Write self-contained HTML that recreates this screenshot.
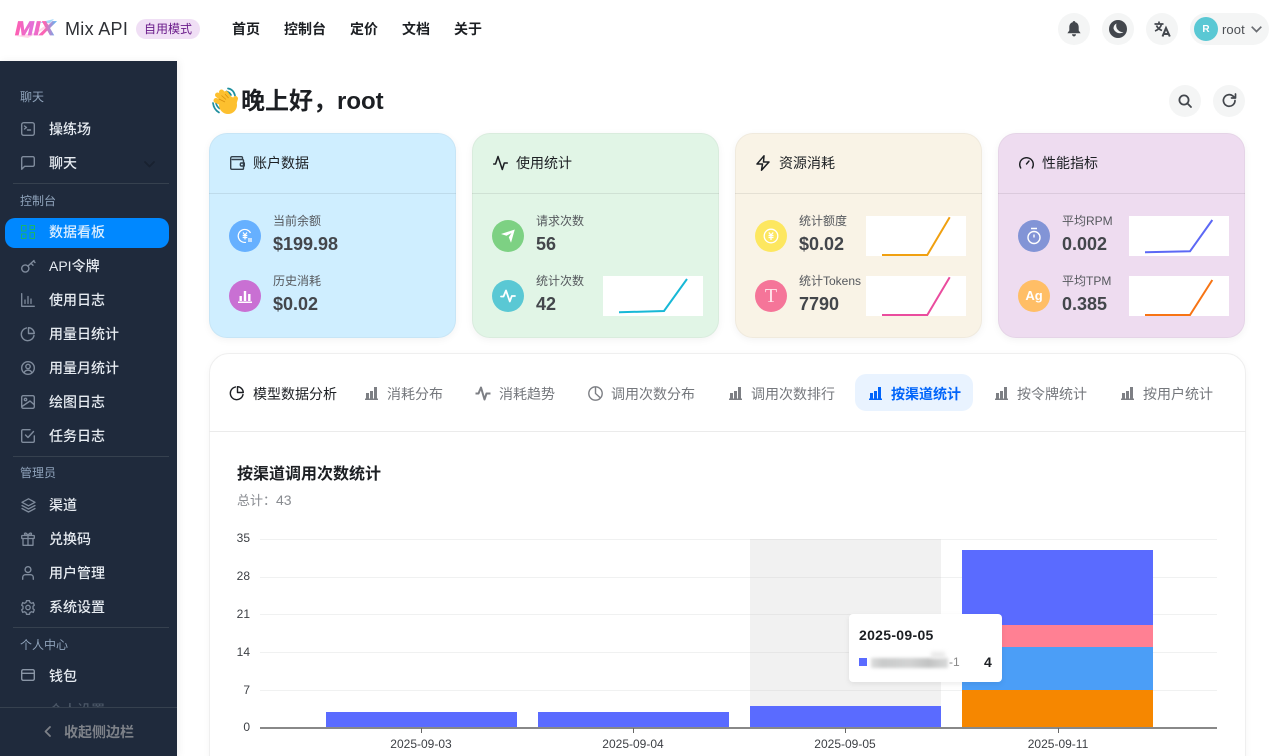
<!DOCTYPE html>
<html lang="zh"><head><meta charset="utf-8"><title>Mix API</title>
<style>
*{box-sizing:border-box;margin:0;padding:0}
html,body{width:1276px;height:756px;overflow:hidden;background:#fff}
body{position:relative;font-family:"Liberation Sans","Noto Sans CJK SC",sans-serif;color:#1c1f23}
.a{position:absolute;white-space:nowrap}
svg{display:block;overflow:visible}
.i{position:absolute;fill:none;stroke:currentColor;stroke-width:2;stroke-linecap:round;stroke-linejoin:round}
#side{position:absolute;left:0;top:61px;width:177px;height:695px;background:#1f2a3c;box-shadow:2px 0 8px rgba(0,0,0,.06);overflow:hidden}
.sl{position:absolute;left:20px;font-size:12px;line-height:18px;height:18px;color:#8fa3bb;white-space:nowrap}
.si{position:absolute;left:49px;font-size:14px;line-height:20px;height:20px;color:#e6ebf1;white-space:nowrap;font-weight:500}
.sd{position:absolute;left:13px;width:156px;height:1px;background:#36414f}
.nav{top:19px;font-size:14px;line-height:20px;font-weight:700;color:#1c1f23}
.cb{position:absolute;width:32px;height:32px;border-radius:50%;background:#f4f5f5}
.card{position:absolute;top:133px;width:247px;height:205px;border-radius:18px;border:1px solid rgba(0,0,0,.035);box-shadow:0 2px 8px rgba(0,0,0,.05)}
.card .hd{position:absolute;left:-1px;right:-1px;top:59px;height:1px;background:rgba(0,0,0,.08)}
.ct{top:153px;font-size:14px;line-height:20px;color:#1c1f23}
.c{position:absolute;width:32px;height:32px;border-radius:50%;color:#fff}
.lb{font-size:12px;line-height:16px;color:#55585d}
.v{font-size:18px;line-height:24px;font-weight:700;color:#43464b}
.sp{position:absolute;width:100px;height:40px;background:#fff}
.tab{top:384px;font-size:14px;line-height:20px;color:#74777c}
.gl{position:absolute;left:260px;width:957px;height:1px;background:#f0f1f1}
.yl{position:absolute;left:220px;width:30px;text-align:right;font-size:12px;line-height:14px;color:#3c3f44}
.xl{position:absolute;top:737px;width:100px;text-align:center;font-size:12px;line-height:14px;color:#3c3f44}
.bar{position:absolute}
.tk{position:absolute;top:728px;width:1px;height:5px;background:#666}
</style></head><body>

<!-- header -->
<svg class="a" style="left:14px;top:18px" width="42" height="22" viewBox="0 0 42 22">
<defs><linearGradient id="lg" x1="0" x2="1"><stop offset="0" stop-color="#ff5fb0"/><stop offset=".4" stop-color="#e36fd8"/><stop offset=".7" stop-color="#ff62b0"/><stop offset="1" stop-color="#5ab8f5"/></linearGradient></defs>
<path d="M2 18 20 15 40 2 32 10 14 20Z" fill="#ffc4e0" opacity=".7"/>
<path d="M24 5 40 1 36 5Z" fill="#8fd0fa" opacity=".8"/>
<text x="1" y="17" font-family="Liberation Sans" font-size="19" font-weight="700" font-style="italic" fill="url(#lg)" stroke="url(#lg)" stroke-width=".7" textLength="40" lengthAdjust="spacingAndGlyphs">MIX</text>
</svg>
<div class="a" style="left:65px;top:19px;font-size:18px;line-height:21px;letter-spacing:.3px;color:#2e3035">Mix API</div>
<div class="a" style="left:136px;top:19px;width:64px;height:20px;border-radius:10px;background:#f0dff5;color:#6a1b8a;font-size:12px;line-height:20px;text-align:center">自用模式</div>
<div class="a nav" style="left:232px">首页</div>
<div class="a nav" style="left:284px">控制台</div>
<div class="a nav" style="left:350px">定价</div>
<div class="a nav" style="left:402px">文档</div>
<div class="a nav" style="left:454px">关于</div>

<div class="cb" style="left:1058px;top:13px"></div>
<svg class="a" style="left:1067px;top:21px" width="14" height="16" viewBox="0 0 14 16"><path d="M7 0C7.800 0 8.300.6 8.300 1.300 10.600 1.900 11.700 3.800 11.700 6.200V9.500L13.600 12.300H.4L2.300 9.500V6.200C2.300 3.800 3.400 1.900 5.700 1.300 5.700.6 6.200 0 7 0ZM5 13.300H9C9 14.500 8.100 15.500 7 15.500S5 14.500 5 13.300Z" fill="#43474d"/></svg>
<div class="cb" style="left:1102px;top:13px"></div>
<svg class="a" style="left:1109px;top:20px" width="18" height="18" viewBox="0 0 18 18"><circle cx="9" cy="9" r="9" fill="#43474d"/><path d="M7.500 3.500A6.500 6.500 0 0 0 14.500 12 6.500 6.500 0 0 1 4.500 8.500 5.500 5.500 0 0 1 7.500 3.500Z" fill="#f4f5f5"/></svg>
<div class="cb" style="left:1146px;top:13px"></div>
<svg class="a" style="left:1154px;top:21px" width="17" height="16" viewBox="0 0 17 16" fill="none" stroke="#43474d" stroke-width="1.700"><path d="M.5 3H9.500M5 .5V3M7.500 3C7 6 4 9 1 10M2.500 4.500C3.500 7 5.500 8.500 8 9.500"/><path d="M8.500 15.500 12 7 15.800 15.500M9.700 13H14.600" stroke-width="2"/></svg>
<div class="a" style="left:1190px;top:13px;width:79px;height:32px;border-radius:16px;background:#f4f5f5"></div>
<div class="a" style="left:1194px;top:17px;width:24px;height:24px;border-radius:50%;background:#5ac8d4;color:#fff;font-size:10px;font-weight:700;line-height:25px;text-align:center">R</div>
<div class="a" style="left:1222px;top:22px;font-size:13px;line-height:15px;letter-spacing:.1px;color:#4c4f54">root</div>
<svg class="a" style="left:1251px;top:26px" width="11" height="7" viewBox="0 0 11 7" fill="none" stroke="#6a6d72" stroke-width="1.700"><path d="M.7.700 5.500 5.500 10.300.7"/></svg>

<!-- sidebar -->
<div id="side">
<div class="sl" style="top:27px">聊天</div>
<div class="si" style="top:58px">操练场</div>
<div class="si" style="top:92px">聊天</div>
<div class="sd" style="top:122px"></div>
<div class="sl" style="top:131px">控制台</div>
<div class="a" style="left:5px;top:157px;width:164px;height:30px;border-radius:10px;background:#0088ff"></div>
<div class="si" style="top:161px;color:#dbeeff">数据看板</div>
<div class="si" style="top:195px">API令牌</div>
<div class="si" style="top:229px">使用日志</div>
<div class="si" style="top:263px">用量日统计</div>
<div class="si" style="top:297px">用量月统计</div>
<div class="si" style="top:331px">绘图日志</div>
<div class="si" style="top:365px">任务日志</div>
<div class="sd" style="top:395px"></div>
<div class="sl" style="top:403px">管理员</div>
<div class="si" style="top:434px">渠道</div>
<div class="si" style="top:468px">兑换码</div>
<div class="si" style="top:502px">用户管理</div>
<div class="si" style="top:536px">系统设置</div>
<div class="sd" style="top:566px"></div>
<div class="sl" style="top:575px">个人中心</div>
<div class="si" style="top:605px">钱包</div>
<div class="si" style="top:639px;color:#4a5666">个人设置</div>

<svg class="i" style="left:21px;top:61px;color:#7f8b9c;stroke-width:1.400" width="14" height="14" viewBox="0 0 14 14"><rect x=".7" y=".7" width="12.600" height="12.600" rx="2"/><path d="M3.500 4 5.500 5.500 3.500 7M6.500 8H9.500"/></svg>
<svg class="i" style="left:21px;top:95px;color:#7f8b9c;stroke-width:1.400" width="14" height="14" viewBox="0 0 14 14"><path d="M.7 13.300V2.200C.7 1.400 1.400.7 2.200.7H11.800C12.600.7 13.300 1.400 13.300 2.200V8.800C13.300 9.600 12.600 10.300 11.800 10.300H3.700Z"/></svg>
<svg class="i" style="left:144px;top:100px;color:#182130;stroke-width:1.800" width="11" height="7" viewBox="0 0 11 7"><path d="M1 1 5.500 5.500 10 1"/></svg>
<svg class="i" style="left:21px;top:164px;color:#19b56d;stroke-width:1" width="14" height="14" viewBox="0 0 14 14"><rect x=".5" y=".5" width="4.500" height="5.500"/><rect x="9" y=".5" width="4.500" height="4"/><rect x=".5" y="9" width="4.500" height="4.500"/><rect x="9" y="7.500" width="4.500" height="6"/></svg>
<svg class="i" style="left:21px;top:198px;color:#7f8b9c;stroke-width:1.400" width="15" height="14" viewBox="0 0 15 14"><circle cx="4.300" cy="9.500" r="3.600"/><path d="M7 7 13 1.500M10 4.300 12 6.300M12.500 2 14 3.500"/></svg>
<svg class="i" style="left:21px;top:232px;color:#7f8b9c;stroke-width:1.300" width="14" height="14" viewBox="0 0 14 14"><path d="M.7.700V13.300H13.300M4 10.500V7M7 10.500V3.500M10 10.500V6"/></svg>
<svg class="i" style="left:21px;top:266px;color:#7f8b9c;stroke-width:1.400" width="14" height="14" viewBox="0 0 14 14"><path d="M5.500 1A6.400 6.400 0 1 0 13 8.500"/><path d="M7.500.7A6 6 0 0 1 13.300 6.500H7.500Z"/></svg>
<svg class="i" style="left:21px;top:300px;color:#7f8b9c;stroke-width:1.400" width="14" height="14" viewBox="0 0 14 14"><circle cx="7" cy="7" r="6.300"/><circle cx="7" cy="5.500" r="2.200"/><path d="M3.300 11.500C4 9.700 5.500 9.200 7 9.200S10 9.700 10.700 11.500"/></svg>
<svg class="i" style="left:21px;top:334px;color:#7f8b9c;stroke-width:1.400" width="14" height="14" viewBox="0 0 14 14"><rect x=".7" y=".7" width="12.600" height="12.600" rx="1.500"/><circle cx="4.500" cy="4.500" r="1.200"/><path d="M1 11.500 9 6 13 9.500"/></svg>
<svg class="i" style="left:21px;top:368px;color:#7f8b9c;stroke-width:1.400" width="14" height="14" viewBox="0 0 14 14"><path d="M13.300 7V12C13.300 12.800 12.800 13.300 12 13.300H2C1.200 13.300.7 12.800.7 12V2C.7 1.200 1.200.7 2 .7H9"/><path d="M4.500 6 7 8.500 12.500 2.500"/></svg>
<svg class="i" style="left:21px;top:437px;color:#7f8b9c;stroke-width:1.300" width="15" height="15" viewBox="0 0 15 15"><path d="M7.500.8 14 4.300 7.500 7.800 1 4.300Z"/><path d="M1 7.500 7.500 11 14 7.500M1 10.500 7.500 14 14 10.500"/></svg>
<svg class="i" style="left:21px;top:471px;color:#7f8b9c;stroke-width:1.300" width="14" height="14" viewBox="0 0 14 14"><rect x=".7" y="3.500" width="12.600" height="3" rx=".5"/><path d="M2 6.500V13.300H12V6.500M7 3.500V13.300M7 3.500C5 3.500 3.500 2.800 3.500 1.800S5.500.3 7 3.500C8.500.3 10.500.8 10.500 1.800S9 3.500 7 3.500Z"/></svg>
<svg class="i" style="left:22px;top:505px;color:#7f8b9c;stroke-width:1.400" width="12" height="14" viewBox="0 0 12 14"><circle cx="6" cy="3.600" r="2.900"/><path d="M.7 13.300V11.500C.7 9.800 2 8.700 3.500 8.700H8.500C10 8.700 11.300 9.800 11.300 11.500V13.300"/></svg>
<svg class="i" style="left:21px;top:539px;color:#7f8b9c;stroke-width:1.300" width="14" height="15" viewBox="0 0 14 15"><path d="M5.500.7H8.500L9 2.500 10.700 3.300 12.300 2.600 13.300 5.200 12 6.300V8.700L13.300 9.800 12.300 12.400 10.700 11.700 9 12.500 8.500 14.300H5.500L5 12.500 3.300 11.700 1.700 12.400.7 9.800 2 8.700V6.300L.7 5.200 1.700 2.600 3.300 3.300 5 2.500Z"/><circle cx="7" cy="7.500" r="2.200"/></svg>
<svg class="i" style="left:21px;top:608px;color:#8a96a6;stroke-width:1.400" width="14" height="12" viewBox="0 0 14 12"><rect x=".7" y=".7" width="12.600" height="10.600" rx="1.500"/><path d="M.7 4.300H13.300"/></svg>

<div class="a" style="left:0;top:646px;width:177px;height:49px;background:#1f2a3c;border-top:1px solid #36414f"></div>
<svg class="i" style="left:44px;top:665px;color:#7d8188;stroke-width:1.800" width="7" height="11" viewBox="0 0 7 11"><path d="M6 1 1.500 5.500 6 10"/></svg>
<div class="a" style="left:64px;top:661px;font-size:14px;line-height:20px;font-weight:700;color:#7d8188">收起侧边栏</div>
</div>

<!-- welcome -->
<svg class="a" style="left:211px;top:87px" width="28" height="28" viewBox="0 0 28 28">
<path d="M17 1.500C20.500 2 23 4.500 24 8.500M15.500 4.500C17.500 5 19 6 20 8M2 16C2.500 20 4.500 23.500 8 25.500M5 16C5.500 18.500 6.500 20 8.500 21.500" fill="none" stroke="#1e8f9e" stroke-width="1.700" stroke-linecap="round"/>
<g stroke="#fdc02f" stroke-width="5" stroke-linecap="round" fill="none"><path d="M15 18 5 13.500M16 15 6.500 8M18 14 10.500 5M20 14 15 6.500M22.500 18 24.500 11.500"/></g>
<circle cx="17" cy="18" r="9" fill="#fdc02f"/>
<path d="M8 12 14 15M10.500 8.500 15 12.500M14 7 17.500 11" stroke="#d9920f" stroke-width=".8" fill="none"/>
</svg>
<div class="a" style="left:241px;top:86px;font-size:24px;line-height:32px;font-weight:700;color:#1c1f23">晚上好，root</div>
<div class="cb" style="left:1169px;top:85px"></div>
<svg class="i" style="left:1178px;top:94px;color:#43474d;stroke-width:1.800" width="14" height="14" viewBox="0 0 14 14"><circle cx="6" cy="6" r="4.600"/><path d="M9.500 9.500 13 13"/></svg>
<div class="cb" style="left:1213px;top:85px"></div>
<svg class="i" style="left:1222px;top:93px;color:#43474d;stroke-width:1.700" width="15" height="15" viewBox="0 0 15 15"><path d="M13 7.500A5.800 5.800 0 1 1 10.500 2.700L13.300 5M13.500 1V5H9.500"/></svg>

<!-- cards -->
<div class="card" style="left:209px;background:#cfeeff"><div class="hd"></div></div>
<div class="card" style="left:472px;background:#e1f5e6"><div class="hd"></div></div>
<div class="card" style="left:735px;background:#f9f3e6"><div class="hd"></div></div>
<div class="card" style="left:998px;background:#eedcf0"><div class="hd"></div></div>

<svg class="i" style="left:230px;top:156px;color:#33404c;stroke-width:1.400" width="15" height="14" viewBox="0 0 15 14"><path d="M12.500 3.500V1.800C12.500 1.200 12 .7 11.400.7H2.200C1.300.7.700 1.400.700 2.200V12C.7 12.800 1.200 13.300 2 13.300H12.500C13.100 13.300 13.500 12.800 13.500 12.200V4.600C13.500 4 13.100 3.500 12.500 3.500H2.200"/><path d="M14.300 7H11.200C10 7 10 10 11.200 10H14.300Z"/></svg>
<div class="a ct" style="left:253px">账户数据</div>
<svg class="i" style="left:493px;top:155px;color:#1c1f23;stroke-width:1.500" width="15" height="16" viewBox="0 0 15 16"><path d="M.7 9H2.500L5 1.500 9.300 14.500 11.300 8H14.300"/></svg>
<div class="a ct" style="left:516px">使用统计</div>
<svg class="i" style="left:756px;top:155px;color:#1c1f23;stroke-width:1.500" width="14" height="16" viewBox="0 0 14 16"><path d="M8 .8 1 9H6.500L5.500 15.200 13 7H7.500L8 .8Z"/></svg>
<div class="a ct" style="left:779px">资源消耗</div>
<svg class="i" style="left:1019px;top:157px;color:#1c1f23;stroke-width:1.400" width="15" height="12" viewBox="0 0 15 12"><path d="M1.700 11A6.800 6.800 0 1 1 13.300 11M7.500 7 10 4"/></svg>
<div class="a ct" style="left:1042px">性能指标</div>

<!-- stat circles -->
<div class="c" style="left:229px;top:220px;background:#66b0ff"></div>
<svg class="a" style="left:237px;top:228px" width="16" height="16" viewBox="0 0 16 16" fill="none" stroke="#fff" stroke-width="1.200"><path d="M13.500 5A6.500 6.500 0 1 0 9 14.300M6 4.500 8 7 10 4.500M8 7V11.500M5.700 7.500H10.300M5.700 9.500H10.300M11 11H15M11 13H15"/></svg>
<div class="c" style="left:229px;top:280px;background:#c970d3"></div>
<svg class="a" style="left:238px;top:288px" width="14" height="16" viewBox="0 0 14 16" fill="#fff"><rect x="1.500" y="8" width="2.400" height="5"/><rect x="5.800" y="3" width="2.400" height="10"/><rect x="10.100" y="6" width="2.400" height="7"/><rect y="13.500" width="14" height="1.500"/></svg>
<div class="c" style="left:492px;top:220px;background:#7dd183"></div>
<svg class="a" style="left:500px;top:228px" width="16" height="16" viewBox="0 0 16 16"><path d="M1 6 14.800 1.500 11 14.800 8.800 9.300 11.500 5 6.500 7.800Z" fill="#fff"/></svg>
<div class="c" style="left:492px;top:280px;background:#5ac8d4"></div>
<svg class="a" style="left:500px;top:288px" width="16" height="16" viewBox="0 0 16 16" fill="none" stroke="#fff" stroke-width="1.800" stroke-linecap="round" stroke-linejoin="round"><path d="M1 8.500H3.500L6 2.500 9.800 13.500 11.800 8H15"/></svg>
<div class="c" style="left:755px;top:220px;background:#fde760"></div>
<svg class="a" style="left:763px;top:228px" width="16" height="16" viewBox="0 0 16 16" fill="none" stroke="#fff" stroke-width="1.300"><circle cx="8" cy="8" r="6.800"/><path d="M5.800 4.500 8 7 10.200 4.500M8 7V12M5.500 7.500H10.500M5.500 9.500H10.500"/></svg>
<div class="c" style="left:755px;top:280px;background:#f57599"></div>
<div class="a" style="left:755px;top:280px;width:32px;height:32px;color:#ffe3ea;font:20px/32px 'Liberation Serif',serif;text-align:center">T</div>
<div class="c" style="left:1018px;top:220px;background:#8294d6"></div>
<svg class="a" style="left:1026px;top:227px" width="16" height="18" viewBox="0 0 16 18" fill="none" stroke="#fff" stroke-width="1.400"><circle cx="8" cy="10.500" r="6"/><path d="M5 1.500H11M8 7.500V10.500"/></svg>
<div class="c" style="left:1018px;top:280px;background:#ffbe66"></div>
<div class="a" style="left:1018px;top:280px;width:32px;height:32px;color:#fff;font-size:13px;font-weight:700;line-height:32px;text-align:center">Ag</div>

<!-- stat text -->
<div class="a lb" style="left:273px;top:213px">当前余额</div><div class="a v" style="left:273px;top:232px">$199.98</div>
<div class="a lb" style="left:273px;top:273px">历史消耗</div><div class="a v" style="left:273px;top:292px">$0.02</div>
<div class="a lb" style="left:536px;top:213px">请求次数</div><div class="a v" style="left:536px;top:232px">56</div>
<div class="a lb" style="left:536px;top:273px">统计次数</div><div class="a v" style="left:536px;top:292px">42</div>
<div class="a lb" style="left:799px;top:213px">统计额度</div><div class="a v" style="left:799px;top:232px">$0.02</div>
<div class="a lb" style="left:799px;top:273px">统计Tokens</div><div class="a v" style="left:799px;top:292px">7790</div>
<div class="a lb" style="left:1062px;top:213px">平均RPM</div><div class="a v" style="left:1062px;top:232px">0.002</div>
<div class="a lb" style="left:1062px;top:273px">平均TPM</div><div class="a v" style="left:1062px;top:292px">0.385</div>

<!-- sparklines -->
<svg class="sp" style="left:603px;top:276px" viewBox="0 0 100 40"><path d="M16 36.300 61 35 84 3" fill="none" stroke="#17b8d6" stroke-width="2"/></svg>
<svg class="sp" style="left:866px;top:216px" viewBox="0 0 100 40"><path d="M16 39H61.300L83.700 1.300" fill="none" stroke="#f0a010" stroke-width="2"/></svg>
<svg class="sp" style="left:866px;top:276px" viewBox="0 0 100 40"><path d="M16 39H61.300L83.700 1.300" fill="none" stroke="#ea4c9e" stroke-width="2"/></svg>
<svg class="sp" style="left:1129px;top:216px" viewBox="0 0 100 40"><path d="M16 36.300 61 35.300 83.300 4" fill="none" stroke="#5c68f5" stroke-width="2"/></svg>
<svg class="sp" style="left:1129px;top:276px" viewBox="0 0 100 40"><path d="M16 39H61L83.300 4" fill="none" stroke="#f77414" stroke-width="2"/></svg>

<!-- main card -->
<div class="a" style="left:209px;top:353px;width:1037px;height:440px;border-radius:20px;background:#fff;border:1px solid #efefef;box-shadow:0 2px 8px rgba(0,0,0,.04)"></div>
<div class="a" style="left:209px;top:431px;width:1037px;height:1px;background:#ebebeb"></div>

<svg class="i" style="left:230px;top:386px;color:#1c1f23;stroke-width:1.400" width="14" height="14" viewBox="0 0 14 14"><path d="M5.500 1A6.400 6.400 0 1 0 13 8.500"/><path d="M7.500.7A6 6 0 0 1 13.300 6.500H7.500Z"/></svg>
<div class="a tab" style="left:253px;color:#1c1f23">模型数据分析</div>

<svg class="a" style="left:365px;top:387px" width="13" height="13" viewBox="0 0 13 13" fill="#7d7f84"><rect x="1" y="6" width="3" height="5.500"/><rect x="5" y="4" width="3" height="7.500"/><rect x="9" y="0" width="3" height="11.500"/><rect y="11.500" width="13" height="1.500"/></svg>
<div class="a tab" style="left:387px">消耗分布</div>
<svg class="a" style="left:475px;top:386px" width="16" height="15" viewBox="0 0 16 15" fill="none" stroke="#7d7f84" stroke-width="2" stroke-linejoin="round"><path d="M.5 7.500H3.500L6 1.500 9.500 13.500 11.500 7.500H15.500"/></svg>
<div class="a tab" style="left:499px">消耗趋势</div>
<svg class="a" style="left:588px;top:386px" width="15" height="15" viewBox="0 0 15 15" fill="none" stroke="#7d7f84" stroke-width="1.400"><circle cx="7.500" cy="7.500" r="6.700"/><path d="M7.500 .8V7.500L12.500 12"/></svg>
<div class="a tab" style="left:611px">调用次数分布</div>
<svg class="a" style="left:729px;top:387px" width="13" height="13" viewBox="0 0 13 13" fill="#7d7f84"><rect x="1" y="6" width="3" height="5.500"/><rect x="5" y="4" width="3" height="7.500"/><rect x="9" y="0" width="3" height="11.500"/><rect y="11.500" width="13" height="1.500"/></svg>
<div class="a tab" style="left:751px">调用次数排行</div>
<div class="a" style="left:855px;top:374px;width:118px;height:37px;border-radius:11px;background:#e9f3ff"></div>
<svg class="a" style="left:869px;top:387px" width="13" height="13" viewBox="0 0 13 13" fill="#0064fa"><rect x="1" y="6" width="3" height="5.500"/><rect x="5" y="4" width="3" height="7.500"/><rect x="9" y="0" width="3" height="11.500"/><rect y="11.500" width="13" height="1.500"/></svg>
<div class="a tab" style="left:891px;color:#0064fa;font-weight:700">按渠道统计</div>
<svg class="a" style="left:995px;top:387px" width="13" height="13" viewBox="0 0 13 13" fill="#7d7f84"><rect x="1" y="6" width="3" height="5.500"/><rect x="5" y="4" width="3" height="7.500"/><rect x="9" y="0" width="3" height="11.500"/><rect y="11.500" width="13" height="1.500"/></svg>
<div class="a tab" style="left:1017px">按令牌统计</div>
<svg class="a" style="left:1121px;top:387px" width="13" height="13" viewBox="0 0 13 13" fill="#7d7f84"><rect x="1" y="6" width="3" height="5.500"/><rect x="5" y="4" width="3" height="7.500"/><rect x="9" y="0" width="3" height="11.500"/><rect y="11.500" width="13" height="1.500"/></svg>
<div class="a tab" style="left:1143px">按用户统计</div>

<div class="a" style="left:237px;top:464px;font-size:16px;line-height:22px;font-weight:700;color:#1c1f23">按渠道调用次数统计</div>
<div class="a" style="left:237px;top:491px;font-size:13px;line-height:18px;color:#888b90">总计：<span style="font-size:14px">43</span></div>

<!-- chart -->
<div class="gl" style="top:539px"></div><div class="gl" style="top:577px"></div><div class="gl" style="top:614px"></div><div class="gl" style="top:652px"></div><div class="gl" style="top:690px"></div>
<div class="yl" style="top:531px">35</div><div class="yl" style="top:569px">28</div><div class="yl" style="top:607px">21</div><div class="yl" style="top:645px">14</div><div class="yl" style="top:683px">7</div><div class="yl" style="top:720px">0</div>
<div class="bar" style="left:750px;top:539px;width:191px;height:188px;background:rgba(200,200,200,.25)"></div>
<div class="bar" style="left:326px;top:712px;width:191px;height:16px;background:#5a6bff"></div>
<div class="bar" style="left:538px;top:712px;width:191px;height:16px;background:#5a6bff"></div>
<div class="bar" style="left:750px;top:706px;width:191px;height:22px;background:#5a6bff"></div>
<div class="bar" style="left:962px;top:550px;width:191px;height:75px;background:#5a6bff"></div>
<div class="bar" style="left:962px;top:625px;width:191px;height:22px;background:#ff8093"></div>
<div class="bar" style="left:962px;top:647px;width:191px;height:43px;background:#4b9ef7"></div>
<div class="bar" style="left:962px;top:690px;width:191px;height:38px;background:#f68700"></div>
<div class="a" style="left:260px;top:727px;width:957px;height:2px;background:#888"></div>
<div class="tk" style="left:421px"></div><div class="tk" style="left:633px"></div><div class="tk" style="left:845px"></div><div class="tk" style="left:1058px"></div>
<div class="xl" style="left:371px">2025-09-03</div><div class="xl" style="left:583px">2025-09-04</div><div class="xl" style="left:795px">2025-09-05</div><div class="xl" style="left:1008px">2025-09-11</div>

<!-- tooltip -->
<div class="a" style="left:849px;top:614px;width:153px;height:68px;background:#fff;border-radius:4px;box-shadow:0 2px 6px rgba(0,0,0,.08)"></div>
<div class="a" style="left:859px;top:627px;font-size:14px;line-height:16px;letter-spacing:.3px;font-weight:700;color:#1c1f23">2025-09-05</div>
<div class="a" style="left:859px;top:658px;width:8px;height:8px;background:#5a6bff"></div>
<div class="a" style="left:871px;top:658px;width:77px;height:10px;background:linear-gradient(90deg,#dcdddd,#c9caca 15%,#d2d3d3 50%,#c2c3c3 75%,#d8d9d9);filter:blur(1.500px)"></div>
<div class="a" style="left:931px;top:652px;width:14px;height:6px;background:#e8e8e8;filter:blur(2px)"></div>
<div class="a" style="left:949px;top:655px;font-size:12px;line-height:14px;color:#888">-1</div>
<div class="a" style="left:984px;top:654px;font-size:14px;line-height:16px;font-weight:700;color:#1c1f23">4</div>
</body></html>
